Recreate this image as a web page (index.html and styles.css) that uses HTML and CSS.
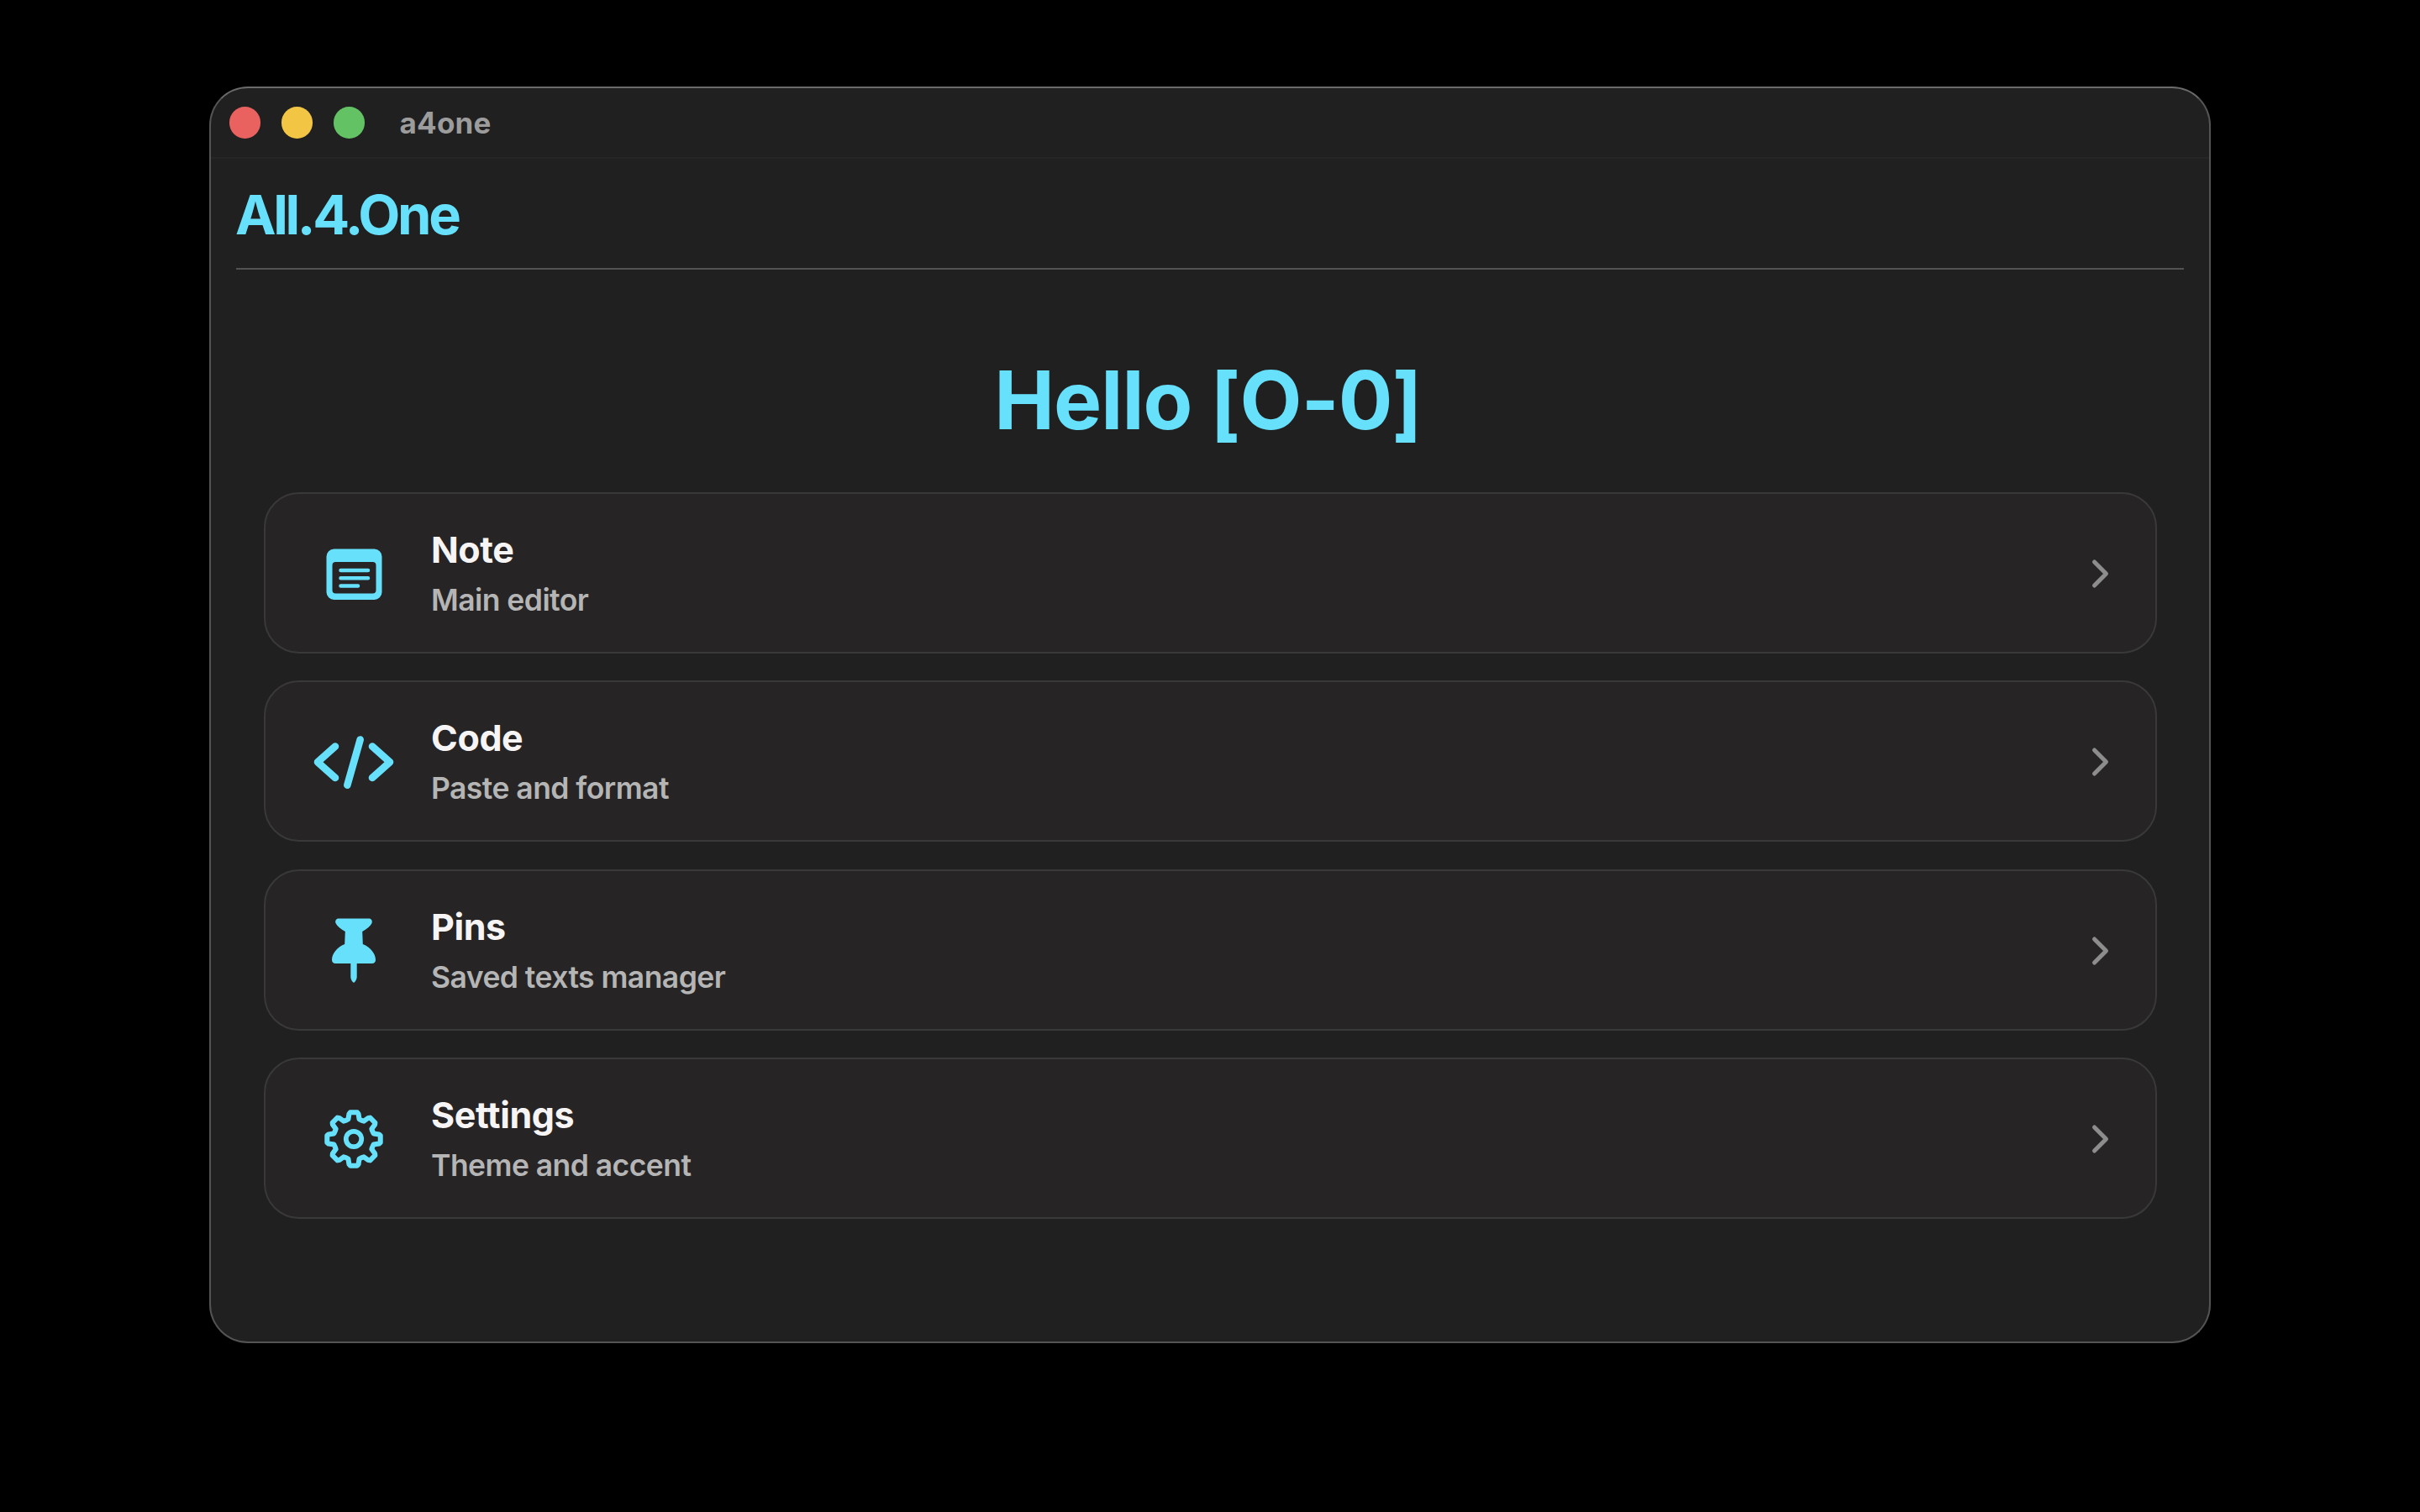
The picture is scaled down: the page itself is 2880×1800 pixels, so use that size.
FILE: index.html
```
<!DOCTYPE html>
<html lang="en">
<head>
    <meta charset="UTF-8">
    <meta name="viewport" content="width=device-width, initial-scale=1.0">
    <title>a4one</title>
    <link rel="stylesheet" href="styles.css">
</head>
<body>
    <div class="window">
        <!-- Title bar -->
        <div class="titlebar">
            <div class="traffic-lights">
                <span class="light light-close"></span>
                <span class="light light-minimize"></span>
                <span class="light light-zoom"></span>
            </div>
            <span class="titlebar-text">a4one</span>
        </div>

        <div class="content">
            <header class="app-header">
                <span class="app-name">All.4.One</span>
            </header>

            <h1 class="greeting">Hello <span class="bracket">[</span>O-0<span class="bracket">]</span></h1>

            <!-- Menu -->
            <nav class="menu">
                <a class="card" href="#note">
                    <svg class="card-icon" viewBox="0 0 100 100">
                        <path fill="currentColor" fill-rule="evenodd" d="M26.500 20.500h48a9 9 0 0 1 9 9v42.500a9 9 0 0 1-9 9h-48a9 9 0 0 1-9-9v-42.500a9 9 0 0 1 9-9zM28.500 36a4 4 0 0 0-4 4v29.500a4 4 0 0 0 4 4h44a4 4 0 0 0 4-4v-29.500a4 4 0 0 0-4-4z"/>
                        <path class="stroke" stroke-width="4.500" d="M34.500 46h32.500M34.500 55.300h32.500M34.500 64.500h20.500"/>
                    </svg>
                    <div class="card-text">
                        <span class="card-title">Note</span>
                        <span class="card-subtitle">Main editor</span>
                    </div>
                    <svg class="chevron" viewBox="0 0 24 36"><path d="M4.500 4L18.500 18L4.500 32"/></svg>
                </a>

                <a class="card" href="#code">
                    <svg class="card-icon" viewBox="0 0 100 100">
                        <path class="stroke" stroke-width="8.600" d="M28 31.500L7 50.200L28 69M72 31.500L93 50.200L72 69M57.700 23.500L42.300 77.700"/>
                    </svg>
                    <div class="card-text">
                        <span class="card-title">Code</span>
                        <span class="card-subtitle">Paste and format</span>
                    </div>
                    <svg class="chevron" viewBox="0 0 24 36"><path d="M4.500 4L18.500 18L4.500 32"/></svg>
                </a>

                <a class="card" href="#pins">
                    <svg class="card-icon" viewBox="0 0 100 100">
                        <path fill="currentColor" d="M32 11.500h36c3 0 4.500 2.500 3.500 5.500c-1.500 3.500-5.500 6.500-11.300 10l.6 15c9.500 3.500 15.200 12 15.200 18.500c0 2.800-1.500 4.500-4.300 4.500h-18v16c0 2.500-1.600 5.500-3.700 7c-2.100-1.500-3.700-4.500-3.700-7v-16h-18c-2.800 0-4.300-1.700-4.300-4.500c0-6.500 5.700-15 15.200-18.500l.6-15c-5.800-3.500-9.800-6.500-11.300-10c-1-3 .5-5.500 3.500-5.500z"/>
                    </svg>
                    <div class="card-text">
                        <span class="card-title">Pins</span>
                        <span class="card-subtitle">Saved texts manager</span>
                    </div>
                    <svg class="chevron" viewBox="0 0 24 36"><path d="M4.500 4L18.500 18L4.500 32"/></svg>
                </a>

                <a class="card" href="#settings">
                    <svg class="card-icon" viewBox="0 0 100 100">
                        <path class="stroke" id="gear" stroke-width="6" d=""/>
                        <circle class="stroke" cx="50" cy="50" r="9.200" stroke-width="5.800"/>
                    </svg>
                    <div class="card-text">
                        <span class="card-title">Settings</span>
                        <span class="card-subtitle">Theme and accent</span>
                    </div>
                    <svg class="chevron" viewBox="0 0 24 36"><path d="M4.500 4L18.500 18L4.500 32"/></svg>
                </a>
            </nav>
        </div>
    </div>

    <script>
        // Build the gear outline: 8 teeth around the center
        const points = [];
        const tooth = [[-19.5, 24.2], [-15.5, 24.5], [-10.5, 30.5], [-7.5, 32], [7.5, 32], [10.5, 30.5], [15.5, 24.5], [19.5, 24.2]];
        for (let i = 0; i < 8; i++) {
            tooth.forEach(([angle, r]) => {
                const a = (i * 45 + angle) * Math.PI / 180;
                points.push((50 + r * Math.sin(a)).toFixed(2) + ' ' + (50 - r * Math.cos(a)).toFixed(2));
            });
        }
        document.getElementById('gear').setAttribute('d', 'M' + points.join('L') + 'Z');
    </script>
</body>
</html>
```

FILE: styles.css
```
* { margin: 0; padding: 0; box-sizing: border-box; }

body {
    height: 1800px;
    background: #000;
    font-family: 'Inter', 'Liberation Sans', sans-serif;
    overflow: hidden;
    padding: 103px 249px 0 249px;
}

.window {
    height: 1496px;
    background: #202020;
    border: 2px solid #545454;
    border-top-color: #6a6a6a;
    border-radius: 46px;
    overflow: hidden;
}

/* Title bar */
.titlebar { height: 84px; border-bottom: 2px solid #262626; display: flex; align-items: center; padding-left: 21.5px; }
.traffic-lights { display: flex; gap: 24.5px; }
.light { width: 37.5px; height: 37.5px; border-radius: 50%; }
.light-close { background: #ea6260; }
.light-minimize { background: #f2c644; }
.light-zoom { background: #62c264; }
.titlebar-text { margin-left: 41.5px; font-size: 35px; font-weight: 700; letter-spacing: 0.2px; color: #9c9c9c; }

/* Header */
.content { padding: 0 30px; }
.app-header { height: 132px; border-bottom: 2px solid #525252; }
.app-name { display: block; font-size: 65px; line-height: 134px; font-weight: 700; letter-spacing: -3.3px; color: #67e1fb; margin-left: -1px; }

.greeting { height: 265px; line-height: 311px; padding-right: 5px; font-size: 96px; font-weight: 700; letter-spacing: -0.9px; color: #67e1fb; text-align: center; font-feature-settings: 'calt' 0; }
.bracket { position: relative; top: 3px; }

/* Menu cards */
.menu { display: flex; flex-direction: column; gap: 32.4px; padding: 0 32px 0 33px; }
.card {
    height: 192px;
    display: flex;
    align-items: center;
    background: #262424;
    border: 2px solid #3a3939;
    border-radius: 42px;
    padding: 2px 53px 0 55px;
    text-decoration: none;
}
.card-icon { width: 100px; height: 100px; color: #67e1fb; flex: none; margin-left: -0.5px; }
.stroke { fill: none; stroke: currentColor; stroke-linecap: round; stroke-linejoin: round; }
.card-text { display: flex; flex-direction: column; flex: 1; margin-left: 42.5px; padding-top: 4px; }
.card-title { font-size: 43px; line-height: 59px; font-weight: 700; letter-spacing: -0.4px; color: #f6f4f5; }
.card-subtitle { font-size: 35.5px; line-height: 61px; font-weight: 600; letter-spacing: -0.55px; color: #b5b5b5; }
.chevron { width: 24px; height: 36px; fill: none; stroke: #8e8d8d; stroke-width: 5px; stroke-linecap: round; stroke-linejoin: round; }
```
